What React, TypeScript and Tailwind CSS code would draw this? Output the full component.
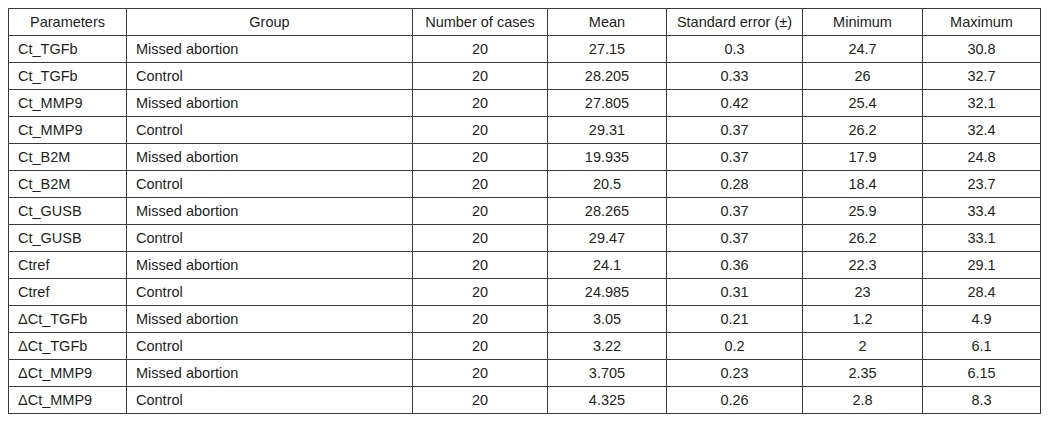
const rows: [string, string, string, string, string, string, string][] = [
  ["Ct_TGFb", "Missed abortion", "20", "27.15", "0.3", "24.7", "30.8"],
  ["Ct_TGFb", "Control", "20", "28.205", "0.33", "26", "32.7"],
  ["Ct_MMP9", "Missed abortion", "20", "27.805", "0.42", "25.4", "32.1"],
  ["Ct_MMP9", "Control", "20", "29.31", "0.37", "26.2", "32.4"],
  ["Ct_B2M", "Missed abortion", "20", "19.935", "0.37", "17.9", "24.8"],
  ["Ct_B2M", "Control", "20", "20.5", "0.28", "18.4", "23.7"],
  ["Ct_GUSB", "Missed abortion", "20", "28.265", "0.37", "25.9", "33.4"],
  ["Ct_GUSB", "Control", "20", "29.47", "0.37", "26.2", "33.1"],
  ["Ctref", "Missed abortion", "20", "24.1", "0.36", "22.3", "29.1"],
  ["Ctref", "Control", "20", "24.985", "0.31", "23", "28.4"],
  ["ΔCt_TGFb", "Missed abortion", "20", "3.05", "0.21", "1.2", "4.9"],
  ["ΔCt_TGFb", "Control", "20", "3.22", "0.2", "2", "6.1"],
  ["ΔCt_MMP9", "Missed abortion", "20", "3.705", "0.23", "2.35", "6.15"],
  ["ΔCt_MMP9", "Control", "20", "4.325", "0.26", "2.8", "8.3"],
];

const headers = [
  "Parameters",
  "Group",
  "Number of cases",
  "Mean",
  "Standard error (±)",
  "Minimum",
  "Maximum",
];

const widths = ["w-[118px]", "w-[286px]", "w-[135px]", "w-[119px]", "w-[136px]", "w-[120px]", "w-[118px]"];

export default function App() {
  return (
    <div className="w-[1049px] h-[423px] bg-white pt-[8px] pl-[8px] font-['Liberation_Sans',Arial,sans-serif] text-[14.5px] text-[#231f20]">
      <table className="table-fixed border-collapse w-[1032px]">
        <colgroup>
          {widths.map((w, i) => (
            <col key={i} className={w} />
          ))}
        </colgroup>
        <thead>
          <tr className="h-[27px]">
            {headers.map((h) => (
              <th key={h} className="border border-[#3a3a3a] font-normal text-center p-0 leading-none">
                {h}
              </th>
            ))}
          </tr>
        </thead>
        <tbody>
          {rows.map((r, i) => (
            <tr key={i} className="h-[27px]">
              {r.map((c, j) => (
                <td
                  key={j}
                  className={
                    j < 2
                      ? "border border-[#3a3a3a] text-left pl-[9px] py-0 leading-none"
                      : "border border-[#3a3a3a] text-center p-0 leading-none"
                  }
                >
                  {c}
                </td>
              ))}
            </tr>
          ))}
        </tbody>
      </table>
    </div>
  );
}
